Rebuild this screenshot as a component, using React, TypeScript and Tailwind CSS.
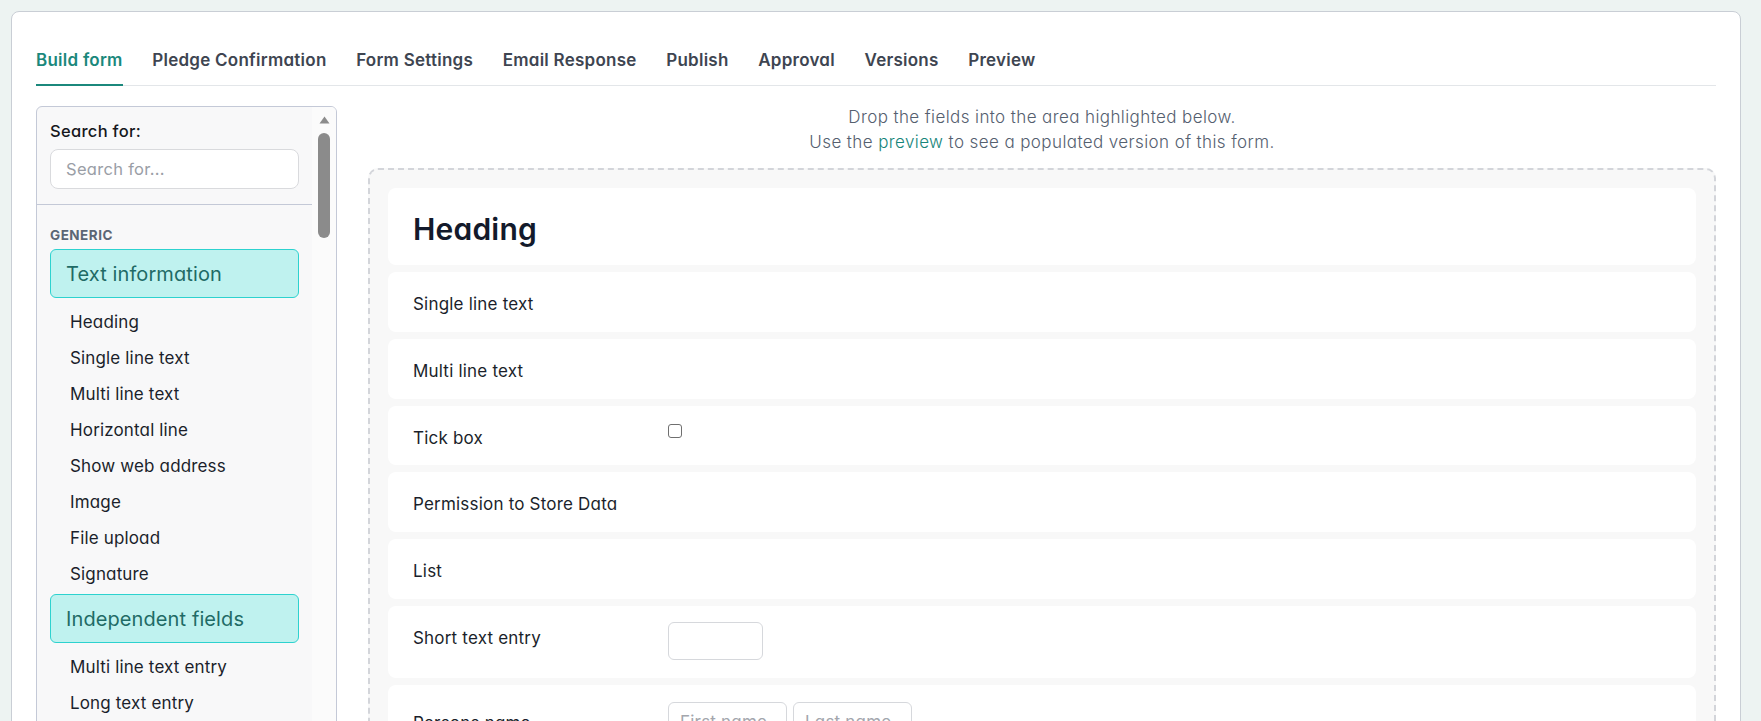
import React from "react";

const tabs = [
  "Build form",
  "Pledge Confirmation",
  "Form Settings",
  "Email Response",
  "Publish",
  "Approval",
  "Versions",
  "Preview",
];

const textItems = [
  "Heading",
  "Single line text",
  "Multi line text",
  "Horizontal line",
  "Show web address",
  "Image",
  "File upload",
  "Signature",
];

const indepItems = [
  "Multi line text entry",
  "Long text entry",
  "Short text entry",
  "Number entry",
  "Date entry",
];

function SectionBox({ label }: { label: string }) {
  return (
    <div className="h-[49px] my-[4px] flex items-center pl-[15px] rounded-[6px] border border-[#2dd2cf] bg-[#bff2ef] text-[20px] tracking-[0.1px] text-[#1f6b66]">
      {label}
    </div>
  );
}

function Item({ label }: { label: string }) {
  return (
    <div className="h-[36px] flex items-center pt-[6px] pl-[20px] text-[17px] tracking-[0.15px] text-[#1b1f2b]">
      {label}
    </div>
  );
}

function FieldCard({
  label,
  children,
  className = "pt-[20px] pb-[16px]",
  labelClass = "",
}: {
  label: string;
  children?: React.ReactNode;
  className?: string;
  labelClass?: string;
}) {
  return (
    <div className={`bg-white rounded-[8px] pl-[25px] pr-[25px] flex items-start ${className}`}>
      <div className={`w-[255px] shrink-0 text-[17px] tracking-[0.2px] leading-[24px] text-[#1b1f2b] ${labelClass}`}>{label}</div>
      <div className="flex-1 flex items-start gap-[6px]">{children}</div>
    </div>
  );
}

export default function App() {
  return (
    <div className="min-h-screen bg-[#edf3f2] pt-[11px] pl-[11px] pr-[20px] font-['Inter','Noto_Sans',sans-serif] [font-feature-settings:'cv11']">
      <div className="bg-white border border-[#c9ced5] rounded-[8px] px-[24px] pt-[36px] pb-[40px]">
        {/* Tabs */}
        <div className="flex gap-[29.6px] border-b border-[#e3e6e9]">
          {tabs.map((t, i) => (
            <div
              key={t}
              className={
                i === 0
                  ? "pb-[12px] leading-[24px] text-[17px] tracking-[0.25px] font-semibold text-[#1b887c] border-b-2 border-[#1b887c] -mb-px"
                  : "pb-[12px] leading-[24px] text-[17px] tracking-[0.25px] font-semibold text-[#3e4551] border-b-2 border-transparent -mb-px"
              }
            >
              {t}
            </div>
          ))}
        </div>

        <div className="mt-5 flex items-start gap-[31px]">
          {/* Sidebar */}
          <div className="w-[301px] shrink-0 border border-[#c4c9d7] rounded-t-[6px] bg-[#f8f8f9] flex overflow-hidden">
            <div className="flex-1 min-w-0">
              <div className="px-[13px] pt-[13px] pb-[15px]">
                <div className="text-[16.5px] tracking-[0.3px] leading-[22px] font-medium text-[#15171c]">Search for:</div>
                <input
                  className="mt-[7px] w-full h-[40px] rounded-[8px] border border-[#d9dadd] bg-white px-[15px] text-[16.5px] tracking-[0.3px] outline-none placeholder:text-[#9a9ea6]"
                  placeholder="Search for..."
                />
              </div>
              <div className="border-t border-[#c4c9d7]" />
              <div className="px-[13px] pt-[21px] pb-[20px]">
                <div className="text-[13.5px] leading-[18px] font-bold tracking-[0.5px] text-[#5b6675]">GENERIC</div>
                <div className="mt-[5px]">
                  <SectionBox label="Text information" />
                  {textItems.map((t) => (
                    <Item key={t} label={t} />
                  ))}
                  <SectionBox label="Independent fields" />
                  {indepItems.map((t) => (
                    <Item key={t} label={t} />
                  ))}
                </div>
              </div>
            </div>
            <div className="w-[24px] shrink-0 bg-[#fbfbfb] flex flex-col items-center pt-[9px]">
              <svg width="11" height="8" viewBox="0 0 11 8">
                <polygon points="5.5,0.5 10.5,7.5 0.5,7.5" fill="#8c8c8c" />
              </svg>
              <div className="mt-[9px] w-[12px] h-[105px] rounded-full bg-[#8b8b8b]" />
            </div>
          </div>

          {/* Main */}
          <div className="flex-1 min-w-0">
            <p className="-mt-[1px] text-center text-[17px] tracking-[0.4px] leading-[25px] font-light text-[#55606f]">
              Drop the fields into the area highlighted below.
              <br />
              Use the <span className="text-[#17857a]">preview</span> to see a populated version of this form.
            </p>
            <div className="mt-[13px] border-2 border-dashed border-[#d3d5da] rounded-[10px] bg-[#f8f8f8] p-[18px] flex flex-col gap-[7px]">
              <div className="bg-white rounded-[8px] pl-[25px] pt-[23px] pb-[18px]">
                <div className="text-[30px] tracking-[0.2px] leading-[36px] font-semibold text-[#131a2b]">Heading</div>
              </div>
              <FieldCard label="Single line text" />
              <FieldCard label="Multi line text" />
              <FieldCard label="Tick box" className="pt-[18px] pb-[15px]" labelClass="mt-[2px]">
                <div className="w-[14px] h-[14px] rounded-[3px] border border-[#6f6f6f] bg-white" />
              </FieldCard>
              <FieldCard label="Permission to Store Data" />
              <FieldCard label="List" />
              <FieldCard label="Short text entry" className="pt-[16px] pb-[18px]" labelClass="mt-[4px]">
                <input className="w-[95px] h-[38px] rounded-[6px] border border-[#d6d8dc] bg-white outline-none" />
              </FieldCard>
              <FieldCard label="Persons name" className="pt-[17px] pb-[18px]" labelClass="mt-[9px]">
                <input
                  className="w-[119px] h-[40px] rounded-[6px] border border-[#d6d8dc] bg-white px-[11px] text-[17px] tracking-[0.2px] outline-none placeholder:text-[#a3a6ad]"
                  placeholder="First name"
                />
                <input
                  className="w-[119px] h-[40px] rounded-[6px] border border-[#d6d8dc] bg-white px-[11px] text-[17px] tracking-[0.2px] outline-none placeholder:text-[#a3a6ad]"
                  placeholder="Last name"
                />
              </FieldCard>
              <FieldCard label="Email address">
                <input className="w-[240px] h-[38px] rounded-[6px] border border-[#d6d8dc] bg-white outline-none" />
              </FieldCard>
            </div>
          </div>
        </div>
      </div>
    </div>
  );
}
